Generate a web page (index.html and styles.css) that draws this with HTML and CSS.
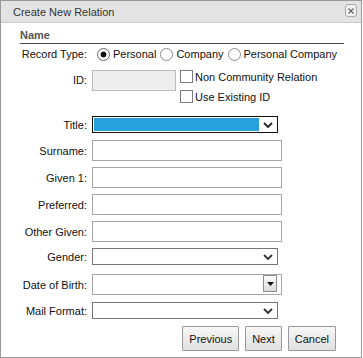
FILE: index.html
```html
<!DOCTYPE html>
<html>
<head>
<meta charset="utf-8">
<link rel="stylesheet" href="styles.css">
</head>
<body>
<div class="dialog">
  <div class="titlebar">
    <span class="title">Create New Relation</span>
    <span class="close"><svg width="6" height="6" viewBox="0 0 6 6"><path d="M0.5 0.5 L5.5 5.5 M5.5 0.5 L0.5 5.5" stroke="#666" stroke-width="1.2" fill="none"/></svg></span>
  </div>
  <div class="body">
    <div class="section-head">Name</div>
    <div class="form">
      <div class="row row--record">
        <span class="lbl">Record Type:</span>
        <label class="opt"><input type="radio" name="rt" class="radio radio--first" checked>Personal</label>
        <label class="opt"><input type="radio" name="rt" class="radio">Company</label>
        <label class="opt"><input type="radio" name="rt" class="radio">Personal Company</label>
      </div>
      <div class="row row--id">
        <span class="lbl lbl--tall">ID:</span>
        <input type="text" class="text-input text-input--id" disabled>
        <div class="checks">
          <label class="opt"><input type="checkbox" class="check">Non Community Relation</label>
          <label class="opt"><input type="checkbox" class="check">Use Existing ID</label>
        </div>
      </div>
      <div class="row row--select row--title">
        <span class="lbl">Title:</span>
        <div class="select select--focus"><span class="sel-highlight"></span><svg class="chev" width="10" height="6" viewBox="0 0 10 6"><path d="M1 1 L5 5 L9 1" stroke="#222" stroke-width="1.8" fill="none"/></svg></div>
      </div>
      <div class="row">
        <span class="lbl">Surname:</span>
        <input type="text" class="text-input">
      </div>
      <div class="row">
        <span class="lbl">Given 1:</span>
        <input type="text" class="text-input">
      </div>
      <div class="row">
        <span class="lbl">Preferred:</span>
        <input type="text" class="text-input">
      </div>
      <div class="row">
        <span class="lbl">Other Given:</span>
        <input type="text" class="text-input">
      </div>
      <div class="row row--select">
        <span class="lbl">Gender:</span>
        <div class="select"><svg class="chev" width="10" height="6" viewBox="0 0 10 6"><path d="M1 1 L5 5 L9 1" stroke="#333" stroke-width="1.8" fill="none"/></svg></div>
      </div>
      <div class="row row--dob">
        <span class="lbl">Date of Birth:</span>
        <div class="text-input combo"><span class="combo-btn"><svg width="7" height="4" viewBox="0 0 7 4"><path d="M0 0 L7 0 L3.5 4 Z" fill="#111"/></svg></span></div>
      </div>
      <div class="row row--select row--mail">
        <span class="lbl">Mail Format:</span>
        <div class="select"><svg class="chev" width="10" height="6" viewBox="0 0 10 6"><path d="M1 1 L5 5 L9 1" stroke="#333" stroke-width="1.8" fill="none"/></svg></div>
      </div>
      <div class="actions">
        <button class="btn">Previous</button>
        <button class="btn">Next</button>
        <button class="btn">Cancel</button>
      </div>
    </div>
  </div>
</div>
</body>
</html>
```

FILE: styles.css
```css
* { box-sizing: border-box; }

body {
  margin: 0;
  background: #fff;
  font-family: "Liberation Sans", Arial, sans-serif;
  font-size: 11px;
  color: #111;
}

.dialog {
  width: 362px;
  height: 358px;
  border: 1px solid #999;
  background: #fff;
  display: flex;
  flex-direction: column;
}

.titlebar {
  height: 22px;
  flex: none;
  background: #e3e3e3;
  border-bottom: 1px solid #c9c9c9;
  display: flex;
  align-items: center;
  justify-content: space-between;
  padding: 0 4px 0 12px;
  color: #333;
}

.close {
  width: 12px;
  height: 13px;
  margin-top: -2px;
  border: 1px solid #aaa;
  border-radius: 3px;
  background: #f0f0f0;
  display: flex;
  align-items: center;
  justify-content: center;
}

.body {
  padding: 5px 17px 0 19px;
}

.section-head {
  font-weight: bold;
  color: #555;
  line-height: 15px;
  border-bottom: 1px solid #4a4a4a;
}

.form {
  display: flex;
  flex-direction: column;
  gap: 6px;
}

.row {
  display: flex;
  align-items: center;
  height: 21px;
}

.row--record { height: 20px; }

.row--id {
  height: auto;
  align-items: flex-start;
}

.row--select { height: 17px; }
.row--title { margin-top: 7px; margin-bottom: 1px; }
.row--dob { margin-top: 3px; }
.row--mail { margin-top: 1px; }

.lbl {
  flex: none;
  width: 67px;
  margin-right: 5px;
  text-align: right;
  white-space: nowrap;
}

.lbl--tall { line-height: 21px; }

.opt {
  display: flex;
  align-items: center;
  white-space: nowrap;
}

.radio {
  appearance: none;
  -webkit-appearance: none;
  width: 13px;
  height: 13px;
  margin: 0 3px 0 4px;
  border: 1px solid #8a8a8a;
  border-radius: 50%;
  background: #fff;
}

.radio--first { margin-left: 5px; }

.radio:checked {
  border-color: #666;
  background: radial-gradient(circle, #111 0, #111 2.6px, #fff 3.3px);
}

.checks {
  display: flex;
  flex-direction: column;
  gap: 7px;
}

.check {
  appearance: none;
  -webkit-appearance: none;
  width: 13px;
  height: 13px;
  margin: 0 2px 0 4px;
  border: 1px solid #7a7a7a;
  background: #fff;
}

.text-input {
  width: 190px;
  height: 21px;
  margin: 0;
  padding: 0;
  border: 1px solid #a6a6a6;
  background: #fff;
  font: inherit;
}

.text-input--id {
  width: 84px;
  background: #eee;
  border-color: #bcbcbc;
}

.select {
  width: 186px;
  height: 17px;
  border: 1px solid #767676;
  background: #fff;
  display: flex;
  align-items: center;
  justify-content: flex-end;
  padding-right: 4px;
}

.select--focus {
  border-color: #111;
  padding: 1px 4px 1px 1px;
  justify-content: space-between;
}

.sel-highlight {
  width: 165px;
  align-self: stretch;
  background: #27a0db;
}

.chev { flex: none; }

.combo {
  display: flex;
  justify-content: flex-end;
  align-items: flex-start;
  padding-right: 4px;
}

.combo-btn {
  width: 14px;
  height: 17px;
  border: 1px solid #8c8c8c;
  background: linear-gradient(#fbfbfb, #d9d9d9);
  display: flex;
  align-items: center;
  justify-content: center;
}

.actions {
  margin-top: 1px;
  display: flex;
  justify-content: flex-end;
  gap: 6px;
  padding-right: 8px;
}

.btn {
  height: 25px;
  padding: 0 6px;
  border: 1px solid #999;
  border-radius: 1px;
  background: linear-gradient(#f7f7f7, #e0e0e0);
  font: inherit;
  color: #111;
}
```
